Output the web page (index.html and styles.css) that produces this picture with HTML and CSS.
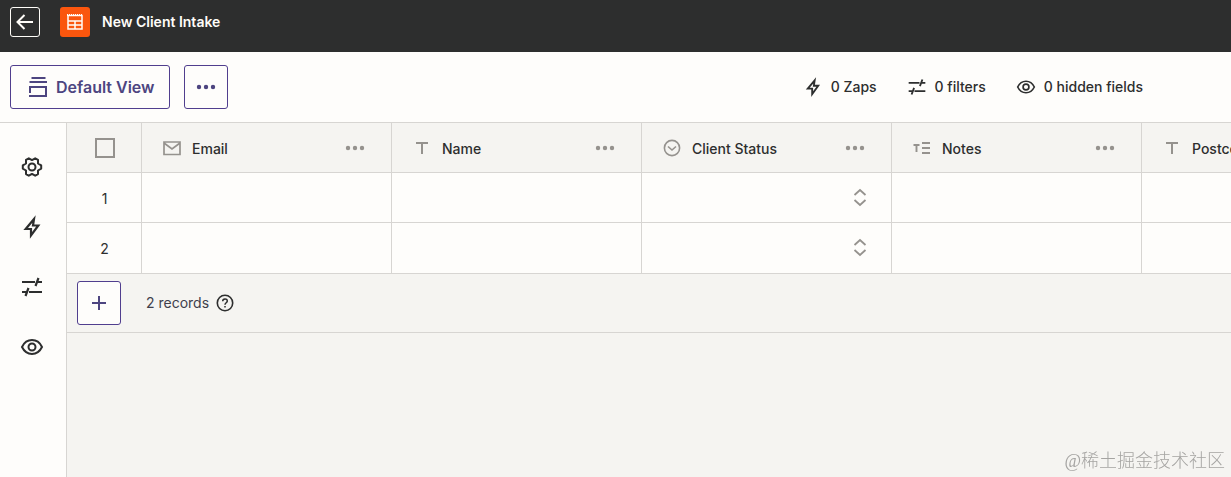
FILE: index.html
```html
<!DOCTYPE html>
<html lang="en">
<head>
	<meta charset="UTF-8">
	<meta name="viewport" content="width=device-width, initial-scale=1">
	<title>New Client Intake</title>
	<link rel="stylesheet" href="styles.css">
</head>
<body>
	<svg class="sprite" aria-hidden="true">
		<symbol id="bolt" viewBox="0 0 24 24">
			<path d="M14 4L5.700 14H11V20.500L18.300 10.500H13Z" fill="none" stroke="currentColor" stroke-width="2.200"/>
		</symbol>
		<symbol id="filters" viewBox="0 0 24 24">
			<path d="M2 7H15M17.500 7H22M18.500 3L15.500 11M2 17H6.500M9 17H22M8.500 13L5.500 21" fill="none" stroke="currentColor" stroke-width="2.200"/>
		</symbol>
		<symbol id="eye" viewBox="0 0 24 24">
			<path d="M2 12C6.500 2.800 17.500 2.800 22 12C17.500 21.200 6.500 21.200 2 12Z" fill="none" stroke="currentColor" stroke-width="2"/>
			<circle cx="12" cy="12" r="3.500" fill="none" stroke="currentColor" stroke-width="2"/>
		</symbol>
		<symbol id="gear" viewBox="0 0 24 24">
			<path d="M21.200 10.400V13.600L18 15.500L18 19.100L15.200 20.700L12 18.900L8.800 20.700L6 19.100L6 15.500L2.800 13.600V10.400L6 8.500L6 4.900L8.800 3.300L12 5.100L15.200 3.300L18 4.900L18 8.500Z" fill="none" stroke="currentColor" stroke-width="2" stroke-linejoin="round"/>
			<circle cx="12" cy="12" r="3.500" fill="none" stroke="currentColor" stroke-width="2"/>
		</symbol>
		<symbol id="dots" viewBox="0 0 20 20">
			<path d="M3 10h.01M10 10h.01M17 10h.01" fill="none" stroke="currentColor" stroke-width="4.400" stroke-linecap="round"/>
		</symbol>
		<symbol id="text" viewBox="0 0 20 20">
			<path d="M4 5H16M10 5V16" fill="none" stroke="currentColor" stroke-width="2"/>
		</symbol>
		<symbol id="updown" viewBox="0 0 20 20">
			<path d="M4.500 7L10 2L15.500 7M4.500 12L10 17L15.500 12" fill="none" stroke="currentColor" stroke-width="1.800"/>
		</symbol>
	</svg>

	<header class="topbar">
		<button class="back" aria-label="Back">
			<svg viewBox="0 0 20 20"><path d="M18 10H3M9.500 3L2.500 10L9.500 17" fill="none" stroke="currentColor" stroke-width="2"/></svg>
		</button>
		<span class="logo">
			<svg viewBox="0 0 20 20">
				<path d="M3 3.500H17V17H3ZM3 9H17M3 13H17M10 9V17" fill="none" stroke="currentColor" stroke-width="1.500"/>
				<path d="M2 3H18" fill="none" stroke="currentColor" stroke-width="2" stroke-dasharray="1 1"/>
			</svg>
		</span>
		<h1>New Client Intake</h1>
	</header>

	<div class="toolbar">
		<button class="outlined view">
			<svg viewBox="0 0 24 24"><path d="M5.500 3H19.500M3.500 7H21M4 18V12H20V21M3 21H21" fill="none" stroke="currentColor" stroke-width="2"/></svg>
			Default View
		</button>
		<button class="outlined square" aria-label="View options"><svg><use href="#dots"/></svg></button>
		<div class="stats">
			<button><svg><use href="#bolt"/></svg>0 Zaps</button>
			<button><svg><use href="#filters"/></svg>0 filters</button>
			<button><svg><use href="#eye"/></svg>0 hidden fields</button>
		</div>
	</div>

	<div class="workspace">
		<nav class="sidebar">
			<button aria-label="Settings"><svg><use href="#gear"/></svg></button>
			<button aria-label="Zaps"><svg><use href="#bolt"/></svg></button>
			<button aria-label="Filters"><svg><use href="#filters"/></svg></button>
			<button aria-label="Hidden fields"><svg><use href="#eye"/></svg></button>
		</nav>

		<main>
			<table>
				<thead>
					<tr>
						<th class="pick"><input type="checkbox" aria-label="Select all records"></th>
						<th>
							<div class="field">
								<svg viewBox="0 0 20 20"><path d="M2 4H18V16.500H2ZM2 5L10 11L18 5" fill="none" stroke="currentColor" stroke-width="1.700"/></svg>
								<span>Email</span>
								<button aria-label="Email options"><svg><use href="#dots"/></svg></button>
							</div>
						</th>
						<th>
							<div class="field">
								<svg><use href="#text"/></svg>
								<span>Name</span>
								<button aria-label="Name options"><svg><use href="#dots"/></svg></button>
							</div>
						</th>
						<th>
							<div class="field">
								<svg viewBox="0 0 20 20"><circle cx="10" cy="10" r="7.600" fill="none" stroke="currentColor" stroke-width="1.600"/><path d="M6 8.500L10 12L14 8.500" fill="none" stroke="currentColor" stroke-width="1.600"/></svg>
								<span>Client Status</span>
								<button aria-label="Client Status options"><svg><use href="#dots"/></svg></button>
							</div>
						</th>
						<th>
							<div class="field">
								<svg viewBox="0 0 20 20"><path d="M1.500 7H7.500M4.500 7V14M10 5H18M10 10H18M10 15H18" fill="none" stroke="currentColor" stroke-width="1.900"/></svg>
								<span>Notes</span>
								<button aria-label="Notes options"><svg><use href="#dots"/></svg></button>
							</div>
						</th>
						<th>
							<div class="field">
								<svg><use href="#text"/></svg>
								<span>Postcode</span>
								<button aria-label="Postcode options"><svg><use href="#dots"/></svg></button>
							</div>
						</th>
					</tr>
				</thead>
				<tbody>
					<tr>
						<td class="pick">1</td>
						<td></td>
						<td></td>
						<td>
							<div class="status">
								<select aria-label="Client Status, record 1"><option></option></select>
								<svg><use href="#updown"/></svg>
							</div>
						</td>
						<td></td>
						<td></td>
					</tr>
					<tr>
						<td class="pick">2</td>
						<td></td>
						<td></td>
						<td>
							<div class="status">
								<select aria-label="Client Status, record 2"><option></option></select>
								<svg><use href="#updown"/></svg>
							</div>
						</td>
						<td></td>
						<td></td>
					</tr>
				</tbody>
			</table>

			<div class="records">
				<button class="outlined square" aria-label="Add record">
					<svg viewBox="0 0 20 20"><path d="M10 3V17M3 10H17" fill="none" stroke="currentColor" stroke-width="2"/></svg>
				</button>
				<span>2 records</span>
				<svg class="help" viewBox="0 0 20 20">
					<circle cx="10" cy="10" r="7.700" fill="none" stroke="currentColor" stroke-width="1.600"/>
					<path d="M7.700 8.200C7.700 5.200 12.300 5.200 12.300 8C12.300 9.800 10 9.800 10 11.800M10 13V14.600" fill="none" stroke="currentColor" stroke-width="1.500"/>
				</svg>
			</div>
		</main>
	</div>

	<div class="watermark">@稀土掘金技术社区</div>
</body>
</html>
```
FILE: styles.css
```css
* {
	box-sizing: border-box;
}

body {
	display: flex;
	flex-direction: column;
	min-height: 100vh;
	margin: 0;
	overflow: hidden;
	background: #fefdfb;
	color: #2d2e2e;
	font: 500 14px/20px Inter, "Liberation Sans", sans-serif;
}

button {
	display: flex;
	align-items: center;
	justify-content: center;
	padding: 0;
	border: 0;
	background: none;
	color: inherit;
	font: inherit;
	cursor: pointer;
}

svg {
	flex: none;
	width: 20px;
	height: 20px;
}

.sprite {
	display: none;
}

.topbar {
	display: flex;
	align-items: center;
	height: 52px;
	padding: 0 10px 8px;
	background: #2d2e2e;
	color: #fffdf9;
}

.topbar h1 {
	margin: 0 0 0 12px;
	font-size: 14px;
	font-weight: 600;
}

.back {
	width: 30px;
	height: 30px;
	border: 1px solid #fffdf9;
	border-radius: 3px;
}

.logo {
	display: flex;
	align-items: center;
	justify-content: center;
	width: 30px;
	height: 30px;
	margin-left: 20px;
	border-radius: 3px;
	background: #fa560e;
}

.toolbar {
	display: flex;
	align-items: center;
	gap: 14px;
	height: 71px;
	padding: 0 88px 0 10px;
	border-bottom: 1px solid #d7d5d2;
}

.outlined {
	height: 44px;
	border: 1px solid #503e8e;
	border-radius: 3px;
	background: #fefdfb;
	color: #4d4580;
}

.view {
	gap: 6px;
	padding: 0 14px 0 15px;
	font-size: 16px;
	font-weight: 600;
}

.view svg {
	width: 24px;
	height: 24px;
}

.square {
	width: 44px;
}

.stats {
	display: flex;
	gap: 30px;
	margin-left: auto;
}

.stats button {
	gap: 8px;
}

.workspace {
	display: flex;
	flex: 1;
}

.sidebar {
	display: flex;
	flex: none;
	flex-direction: column;
	align-items: center;
	gap: 36px;
	width: 67px;
	padding: 32px 3px 0 0;
	border-right: 1px solid #d7d5d2;
}

.sidebar svg {
	width: 24px;
	height: 24px;
}

main {
	flex: 1;
	min-width: 0;
	overflow: hidden;
	background: #f5f4f1;
}

table {
	width: 1325px;
	table-layout: fixed;
	border-spacing: 0;
	background: #fefdfb;
}

th,
td {
	width: 250px;
	height: 50px;
	padding: 0 0 0 20px;
	border: solid #d7d5d2;
	border-width: 0 1px 1px 0;
	font-weight: 500;
	text-align: left;
}

th {
	background: #f5f4f1;
}

tbody tr:last-child td {
	height: 51px;
}

.pick {
	width: 75px;
	padding: 2px 0 0 1px;
	font-weight: 400;
	text-align: center;
}

th.pick {
	padding-top: 0;
}

.pick input {
	display: block;
	width: 20px;
	height: 20px;
	margin: 0 auto;
	border: 2px solid #95928e;
	appearance: none;
}

.field {
	display: flex;
	align-items: center;
	gap: 10px;
	padding-right: 26px;
}

.field span {
	padding-top: 2px;
}

.field svg {
	color: #95928e;
}

.field button {
	margin-left: auto;
}

.status {
	display: grid;
	align-items: center;
	padding-right: 21px;
}

.status > * {
	grid-area: 1 / 1;
}

.status select {
	width: 100%;
	height: 40px;
	border: 0;
	background: none;
	font: inherit;
	appearance: none;
}

.status svg {
	justify-self: end;
	color: #95928e;
	pointer-events: none;
}

.records {
	display: flex;
	align-items: center;
	height: 59px;
	padding: 0 10px;
	border-bottom: 1px solid #d7d5d2;
	font-weight: 400;
}

.records span {
	margin: 0 6px 0 25px;
	color: #403f4c;
}

.watermark {
	position: fixed;
	right: 6px;
	bottom: 4px;
	color: #a5a4a2;
	font: 300 18px/24px "Liberation Serif", "Noto Sans CJK SC", serif;
	pointer-events: none;
}
```
